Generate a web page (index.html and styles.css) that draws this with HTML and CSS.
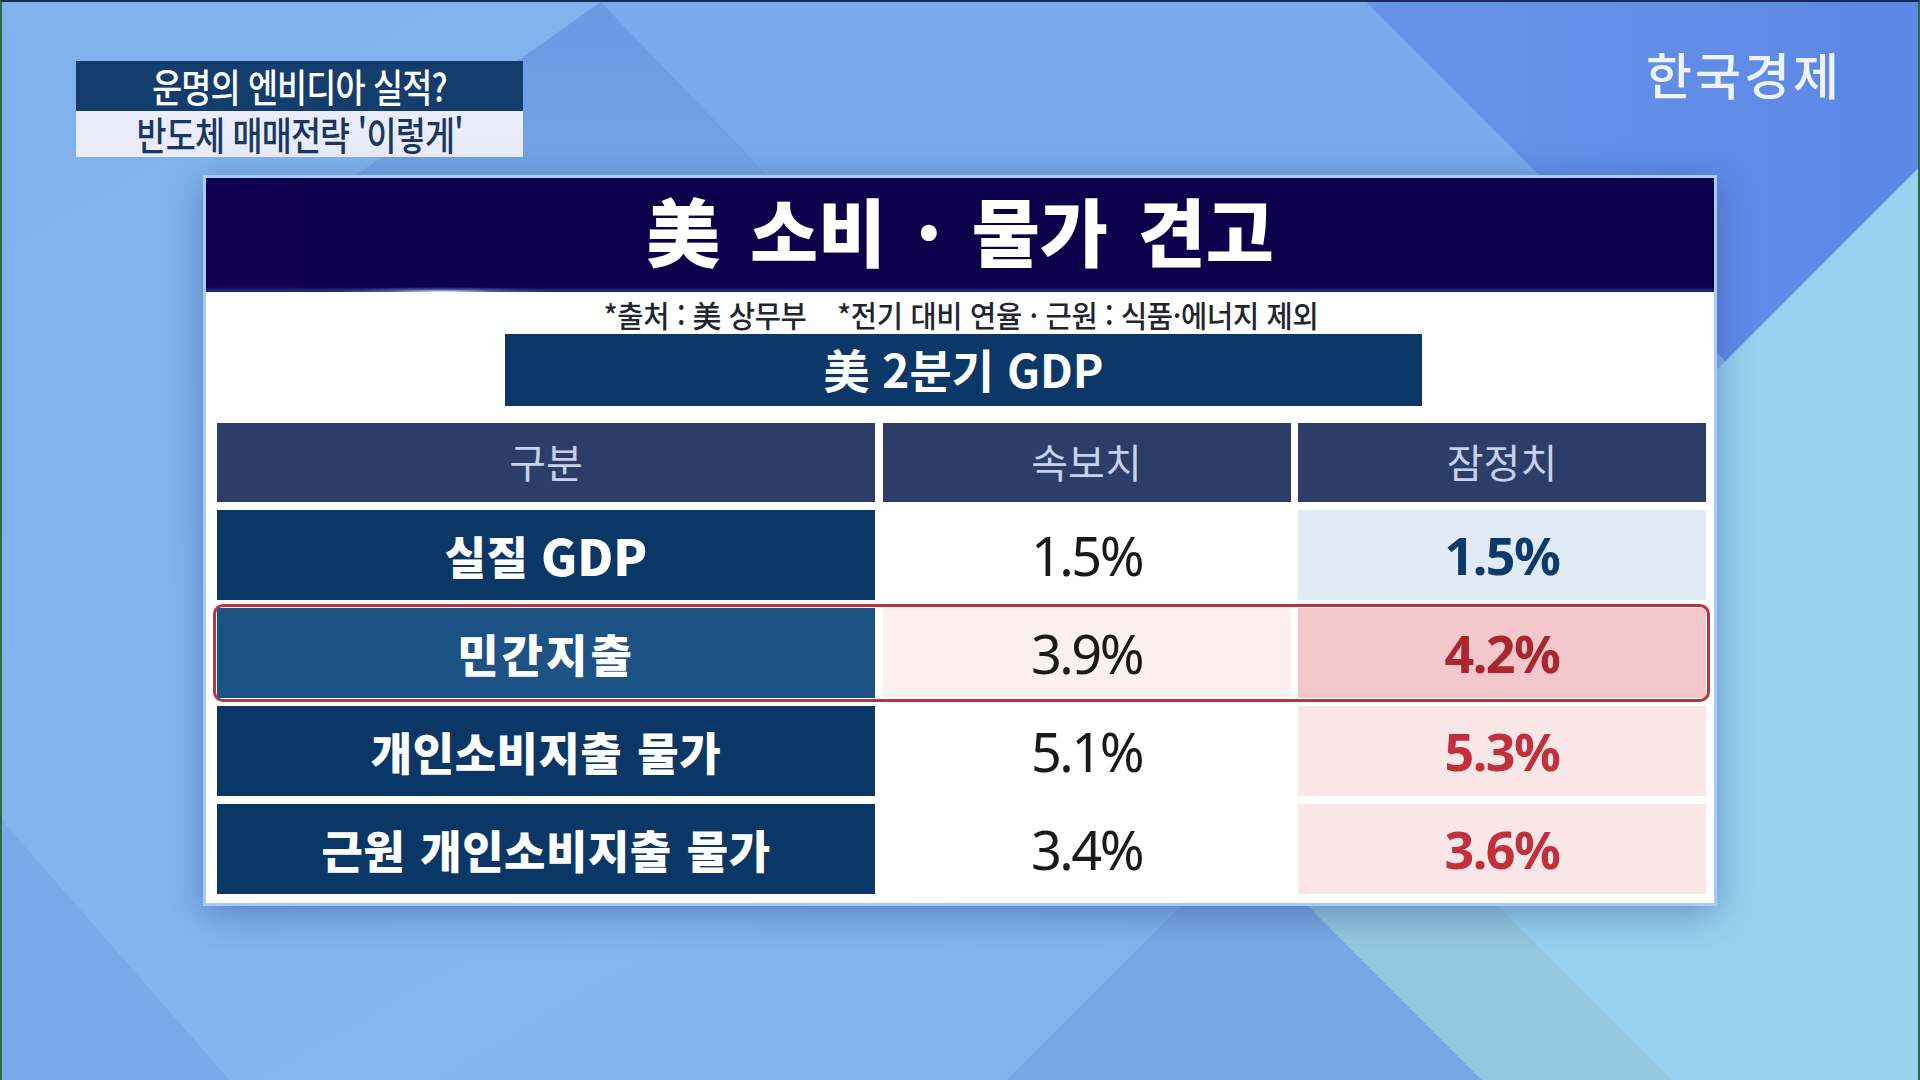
FILE: index.html
```html
<!DOCTYPE html>
<html lang="ko">
<head>
<meta charset="utf-8">
<title>美 소비 · 물가 견고</title>
<link rel="stylesheet" href="styles.css">
</head>
<body>
<div class="screen">
  <svg class="bg" viewBox="0 0 1920 1080" preserveAspectRatio="none" aria-hidden="true">
    <defs>
      <linearGradient id="base" x1="0" y1="0" x2="1" y2="1">
        <stop offset="0" stop-color="#80b3ee"/>
        <stop offset="0.6" stop-color="#84b6ef"/>
        <stop offset="1" stop-color="#7cb0ec"/>
      </linearGradient>
      <linearGradient id="dark" x1="0" y1="0" x2="1" y2="0">
        <stop offset="0" stop-color="#6794e8"/>
        <stop offset="1" stop-color="#5c88e6"/>
      </linearGradient>
      <linearGradient id="wedge" x1="0" y1="0" x2="0" y2="1">
        <stop offset="0" stop-color="#6b99e3"/>
        <stop offset="1" stop-color="#74a4e6"/>
      </linearGradient>
    </defs>
    <rect x="0" y="0" width="1920" height="1080" fill="url(#base)"/>
    <polygon points="600,0 1367,0 1630,263 767,173" fill="#79aaec"/>
    <polygon points="600,0 767,173 355,173" fill="url(#wedge)"/>
    <polygon points="1367,0 1920,0 1920,167 1727,360" fill="url(#dark)"/>
    <polygon points="1245,842 1483,1080 1007,1080" fill="#7aa8e7"/>
    <polygon points="1340,747 1245,842 1483,1080 1673,1080" fill="#96c8e1"/>
    <polygon points="1920,167 1920,1080 1673,1080 1340,747" fill="#98d2f0"/>
    <polygon points="0,820 228,1080 0,1080" fill="#7aaaea"/>
  </svg>

  <div class="content">
    <header class="top">
      <div class="caption">
        <div class="cap cap-main"><span class="squeeze">운명의 엔비디아 실적?</span></div>
        <div class="cap cap-sub"><span class="squeeze">반도체 매매전략 '이렇게'</span></div>
      </div>
      <div class="logo">한국경제</div>
    </header>

    <main class="card">
      <div class="title">美 소비 · 물가 견고</div>
      <div class="sheet">
        <p class="note"><span class="squeeze-note">*출처 : 美 상무부&nbsp;&nbsp;&nbsp; *전기 대비 연율 · 근원 : 식품·에너지 제외</span></p>
        <div class="gdp">美 2분기 GDP</div>
        <div class="table">
          <div class="row head">
            <div class="cell">구분</div>
            <div class="cell">속보치</div>
            <div class="cell">잠정치</div>
          </div>
          <div class="row">
            <div class="cell label">실질 <span class="latin">GDP</span></div>
            <div class="cell num">1.5%</div>
            <div class="cell num strong blue">1.5%</div>
          </div>
          <div class="row hot">
            <div class="cell label wide">민간지출</div>
            <div class="cell num">3.9%</div>
            <div class="cell num strong red">4.2%</div>
          </div>
          <div class="row">
            <div class="cell label">개인소비지출 물가</div>
            <div class="cell num">5.1%</div>
            <div class="cell num strong pink">5.3%</div>
          </div>
          <div class="row">
            <div class="cell label">근원 개인소비지출 물가</div>
            <div class="cell num">3.4%</div>
            <div class="cell num strong pink">3.6%</div>
          </div>
        </div>
      </div>
    </main>
  </div>
</div>
</body>
</html>
```

FILE: styles.css
```css
* { box-sizing: border-box; }

html, body {
  margin: 0;
  padding: 0;
  width: 1920px;
  height: 1080px;
  overflow: hidden;
  background: #7fb2ed;
}

body {
  font-family: "Noto Sans CJK KR", "Noto Sans", sans-serif;
}

.screen {
  display: grid;
  width: 1920px;
  height: 1080px;
  border-top: 2px solid #1b2a56;
  border-left: 2px solid #2e6a44;
  border-right: 2px solid #2e6a44;
}

.bg,
.content {
  grid-area: 1 / 1;
}

.bg {
  width: 100%;
  height: 100%;
  display: block;
}

.content {
  display: flex;
  flex-direction: column;
  margin-left: -2px;
  margin-top: -2px;
}

/* ---------- top bar ---------- */
.top {
  display: flex;
  justify-content: space-between;
  align-items: flex-start;
  padding: 48px 76px 0 76px;
  height: 157px;
}

.caption {
  margin-top: 13px;
  width: 447px;
  display: flex;
  flex-direction: column;
}

.cap {
  display: flex;
  justify-content: center;
  align-items: center;
  white-space: nowrap;
  font-weight: 500;
  font-size: 38px;
  line-height: 1;
}

.cap-main {
  height: 50px;
  background: #133d6d;
  color: #ffffff;
}

.cap-sub {
  height: 46px;
  background: #eaedf9;
  color: #193763;
}

.squeeze {
  display: inline-block;
  line-height: 38px;
  height: 38px;
  transform: scale(0.86, 1.02);
  letter-spacing: -1px;
}

.logo {
  font-size: 50px;
  line-height: 1;
  font-weight: 500;
  color: #eef3fd;
  letter-spacing: 3px;
}

/* ---------- card ---------- */
.card {
  margin: 18px 0 0 203px;
  width: 1514px;
  height: 731px;
  border: 3px solid #a6cbf8;
  background: #ffffff;
  box-shadow: 0 0 0 1px rgba(255,255,255,0.6) inset, 0 8px 34px rgba(25, 45, 110, 0.38);
  display: flex;
  flex-direction: column;
}

.title {
  height: 114px;
  flex: none;
  display: flex;
  align-items: center;
  justify-content: center;
  padding-bottom: 12px;
  background:
    radial-gradient(ellipse 110px 5px at 235px 100%, rgba(255,255,255,0.95), rgba(160,200,255,0.3) 50%, transparent 100%),
    linear-gradient(to bottom, transparent 0, transparent 109px, #1a2a78 112px, #1a2a78 114px),
    linear-gradient(to right, #10004d 0, #10004d 94px, #0d004b 94px);
  color: #ffffff;
  font-size: 74px;
  font-weight: 900;
  line-height: 1;
  word-spacing: 9px;
}

.sheet {
  flex: 1;
  display: flex;
  flex-direction: column;
  align-items: center;
  padding: 0 8px 9px 11px;
}

.note {
  margin: 0;
  height: 42px;
  display: flex;
  align-items: center;
  justify-content: center;
  white-space: nowrap;
  font-size: 30px;
  line-height: 1;
  font-weight: 500;
  color: #1f2631;
  padding-top: 2px;
}

.squeeze-note {
  display: inline-block;
  transform: scaleX(0.95);
  letter-spacing: -0.3px;
}

.gdp {
  width: 917px;
  height: 72px;
  flex: none;
  background: #0b3868;
  color: #ffffff;
  display: flex;
  align-items: center;
  justify-content: center;
  font-size: 46px;
  font-weight: 700;
  line-height: 1;
  letter-spacing: 0;
  padding-bottom: 4px;
  margin-left: 4px;
}

/* ---------- table ---------- */
.table {
  margin-top: 17px;
  width: 1489px;
  display: flex;
  flex-direction: column;
  gap: 8px;
}

.row {
  display: grid;
  grid-template-columns: 658px 408px 408px;
  column-gap: 7.5px;
  height: 90px;
}

.row.head {
  height: 79px;
}

.cell {
  display: flex;
  align-items: center;
  justify-content: center;
  line-height: 1;
  white-space: nowrap;
}

.head .cell {
  background: #2c3e68;
  color: #c9d0ea;
  font-size: 40px;
  font-weight: 400;
  padding-bottom: 4px;
}

.label {
  background: #0a3766;
  color: #ffffff;
  font-size: 45px;
  font-weight: 900;
  letter-spacing: 0.5px;
  word-spacing: 2px;
}

.label.wide {
  letter-spacing: 3px;
}

.latin {
  font-size: 1.1em;
  margin-left: 0.25em;
  letter-spacing: 0;
}

.num {
  font-family: "Noto Sans", "Noto Sans CJK KR", sans-serif;
  font-size: 54px;
  font-weight: 400;
  color: #1a1a1a;
  letter-spacing: -2.5px;
}

.num.strong {
  font-weight: 700;
  font-size: 52px;
  letter-spacing: -1.5px;
}

.blue {
  background: #e0ebf5;
  color: #0c3a6b;
}

.pink {
  background: #f9e6e7;
  color: #c2303c;
}

.hot {
  outline: 3px solid #b8363f;
  outline-offset: 1px;
  border-radius: 6px;
}

.hot .label {
  background: #1c5384;
}

.hot .num {
  background: #fcf0f0;
}

.hot .num.red {
  background: #f2c8ca;
  color: #a8262f;
}
```
